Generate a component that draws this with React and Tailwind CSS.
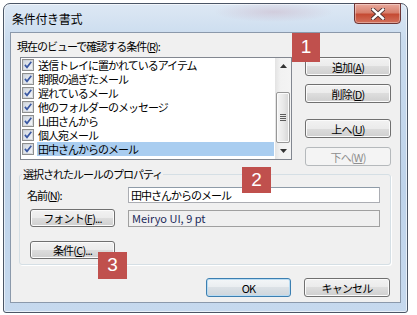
import React from "react";

const ITEMS = [
  "送信トレイに置かれているアイテム",
  "期限の過ぎたメール",
  "遅れているメール",
  "他のフォルダーのメッセージ",
  "山田さんから",
  "個人宛メール",
  "田中さんからのメール",
];

function CheckBox() {
  return (
    <svg width="12" height="12" viewBox="0 0 12 12" className="shrink-0">
      <defs>
        <linearGradient id="cbg" x1="0" y1="0" x2="1" y2="1">
          <stop offset="0" stopColor="#cfd6e0" />
          <stop offset="1" stopColor="#f6f7f9" />
        </linearGradient>
      </defs>
      <rect x="0.5" y="0.5" width="11" height="11" fill="#f4f4f4" stroke="#8e8f8f" />
      <rect x="1.5" y="1.5" width="9" height="9" fill="url(#cbg)" stroke="#c4c8cd" strokeWidth="0.6" />
      <path d="M2.9 5.9 L5 8.3 L9.3 2.8" fill="none" stroke="#3a58a3" strokeWidth="1.7" />
    </svg>
  );
}

// Win7 style push button
function Btn({ children, className = "", disabled, def }) {
  const look = disabled
    ? "border-[#b5b9bc] bg-[#f4f4f4] text-[#8f8f8f]"
    : def
    ? "border-[#3c7fb1] bg-[linear-gradient(#f3f6f8_0%,#e9edf0_50%,#dbe1e6_50%,#cfd6dc_100%)] shadow-[inset_0_0_0_1px_#b9dcf3] text-black"
    : "border-[#707070] bg-[linear-gradient(#f2f2f2_0%,#ebebeb_50%,#dddddd_50%,#cfcfcf_100%)] shadow-[inset_0_0_0_1px_#fbfbfb] text-black";
  return (
    <div
      className={`flex items-center justify-center rounded-[3px] border text-[11px] leading-[14px] tracking-[-0.8px] ${look} ${className}`}
    >
      {children}
    </div>
  );
}

function Badge({ n, className }) {
  return (
    <div
      className={`absolute flex items-center justify-center bg-[#c0504d] text-white text-[19px] font-[family-name:'Liberation_Sans',sans-serif] ${className}`}
    >
      {n}
    </div>
  );
}

function ScrollBar() {
  return (
    <div className="flex w-[16px] flex-col bg-[linear-gradient(to_right,#e3e3e3,#f2f2f2_35%,#f4f4f4)]">
      <div className="flex h-[16px] items-center justify-center">
        <svg width="7" height="4" viewBox="0 0 7 4">
          <path d="M0 4 L3.5 0 L7 4 Z" fill="#333" />
        </svg>
      </div>
      <div className="mt-[18px] flex h-[53px] flex-col items-center justify-center gap-[1px] mx-[1px] rounded-[2px] border border-[#979797] bg-[linear-gradient(to_right,#f5f5f5,#e9e9e9_50%,#d6d6d6)] shadow-[inset_0_0_0_1px_#fbfbfb]">
        <div className="h-[1px] w-[6px] bg-[#5c5c5c]" />
        <div className="h-[1px] w-[6px] bg-[#5c5c5c]" />
        <div className="h-[1px] w-[6px] bg-[#5c5c5c]" />
        <div className="h-[1px] w-[6px] bg-[#5c5c5c]" />
      </div>
      <div className="mt-auto flex h-[16px] items-center justify-center">
        <svg width="7" height="4" viewBox="0 0 7 4">
          <path d="M0 0 L7 0 L3.5 4 Z" fill="#333" />
        </svg>
      </div>
    </div>
  );
}

export default function App() {
  return (
    <div className="relative h-[315px] w-[417px] overflow-hidden bg-white font-[family-name:'Noto_Sans_CJK_JP','Liberation_Sans',sans-serif] text-black">
      {/* window frame */}
      <div className="ml-[3px] mt-[3px] flex h-[310px] w-[405px] flex-col rounded-t-[7px] rounded-b-[3px] border border-[#4b5666] bg-[linear-gradient(#dde8f4_0%,#c9dbee_12%,#bed3ea_60%,#c6d9ee_100%)] shadow-[inset_0_0_0_1px_rgba(255,255,255,0.6)]">
        {/* title bar */}
        <div className="flex h-[28px] shrink-0 bg-[radial-gradient(ellipse_60px_10px_at_270px_8px,rgba(196,160,180,0.35),transparent)]">
          <div className="ml-[8px] mt-[7px] text-[12px] leading-[16px] tracking-[-0.3px]">
            条件付き書式
          </div>
          <div className="ml-auto mr-[6px] mt-[-1px] flex h-[21px] w-[47px] items-center justify-center rounded-b-[4px] border border-[#6d3535] bg-[linear-gradient(#e9a99c_0%,#d7806d_45%,#c54b34_55%,#d2715c_100%)] shadow-[inset_0_0_0_1px_rgba(255,255,255,0.35)]">
            <svg width="14" height="12" viewBox="0 0 14 12">
              <path d="M2 1.5 L12 10.5 M12 1.5 L2 10.5" stroke="#4a3030" strokeWidth="4.2" strokeLinecap="square" />
              <path d="M2 1.5 L12 10.5 M12 1.5 L2 10.5" stroke="#ffffff" strokeWidth="2.4" strokeLinecap="square" />
            </svg>
          </div>
        </div>

        {/* client area */}
        <div className="ml-[6px] flex h-[271px] w-[391px] flex-col border border-[#8b99ab] bg-[#f0f0f0] text-[11px] leading-[14px] tracking-[-1px]">
          <div className="ml-[6px] mt-[6px] h-[14px]">
            現在のビューで確認する条件(<u>R</u>):
          </div>

          <div className="mt-[4px] flex h-[109px] items-start">
            {/* list box */}
            <div className="ml-[9px] flex h-[103px] w-[272px] border border-[#828790] bg-white">
              <div className="flex-1 flex-col">
                {ITEMS.map((t, i) => (
                  <div key={t} className="flex h-[14px] items-center overflow-hidden pl-[1px]">
                    <CheckBox />
                    <div
                      className={`ml-[3px] mr-[1px] h-[14px] flex-1 pl-[1px] ${
                        i === ITEMS.length - 1 ? "bg-[#a9cdf0]" : ""
                      }`}
                    >
                      {t}
                    </div>
                  </div>
                ))}
              </div>
              <ScrollBar />
            </div>

            {/* side buttons */}
            <div className="ml-[13px] flex w-[86px] flex-col">
              <Btn className="h-[19px]">
                追加(<u>A</u>)
              </Btn>
              <Btn className="mt-[8px] h-[19px]">
                削除(<u>D</u>)
              </Btn>
              <Btn className="mt-[16px] h-[19px]">
                上へ(<u>U</u>)
              </Btn>
              <Btn className="mt-[9px] h-[19px]" disabled>
                下へ(<u>W</u>)
              </Btn>
            </div>
          </div>

          {/* properties group */}
          <fieldset className="ml-[8px] mt-[1px] w-[372px] rounded-[3px] border border-[#d5dfe5] pb-[5px] shadow-[1px_1px_0_#fff]">
            <legend className="ml-[2px] h-[14px] px-[1px] leading-[14px]">
              選択されたルールのプロパティ
            </legend>
            <div className="mt-[6px] flex items-center">
              <div className="ml-[7px] w-[101px]">
                名前(<u>N</u>):
              </div>
              <div className="flex h-[16px] w-[252px] items-center border border-[#abadb3] border-t-[#8e9ba8] bg-white pl-[2px]">
                田中さんからのメール
              </div>
            </div>
            <div className="mt-[6px] flex items-center">
              <Btn className="ml-[10px] h-[18px] w-[85px]">
                フォント(<u>F</u>)...
              </Btn>
              <div className="ml-[13px] flex h-[17px] w-[252px] items-center border border-[#a0a0a0] bg-[#f0f0f0] pl-[3px] tracking-[0px] text-[#1b2a5a]">
                Meiryo UI, 9 pt
              </div>
            </div>
            <Btn className="ml-[10px] mt-[14px] h-[18px] w-[85px]">
              条件(<u>C</u>)...
            </Btn>
          </fieldset>

          {/* dialog buttons */}
          <div className="mt-[13px] flex justify-end gap-[13px] pr-[10px]">
            <Btn className="h-[19px] w-[85px]" def>
              OK
            </Btn>
            <Btn className="h-[19px] w-[86px]">キャンセル</Btn>
          </div>
        </div>
      </div>

      {/* callout badges */}
      <Badge n="1" className="left-[292px] top-[33px] h-[29px] w-[28px]" />
      <Badge n="2" className="left-[242px] top-[167px] h-[26px] w-[29px]" />
      <Badge n="3" className="left-[98px] top-[252px] h-[27px] w-[29px]" />
    </div>
  );
}
